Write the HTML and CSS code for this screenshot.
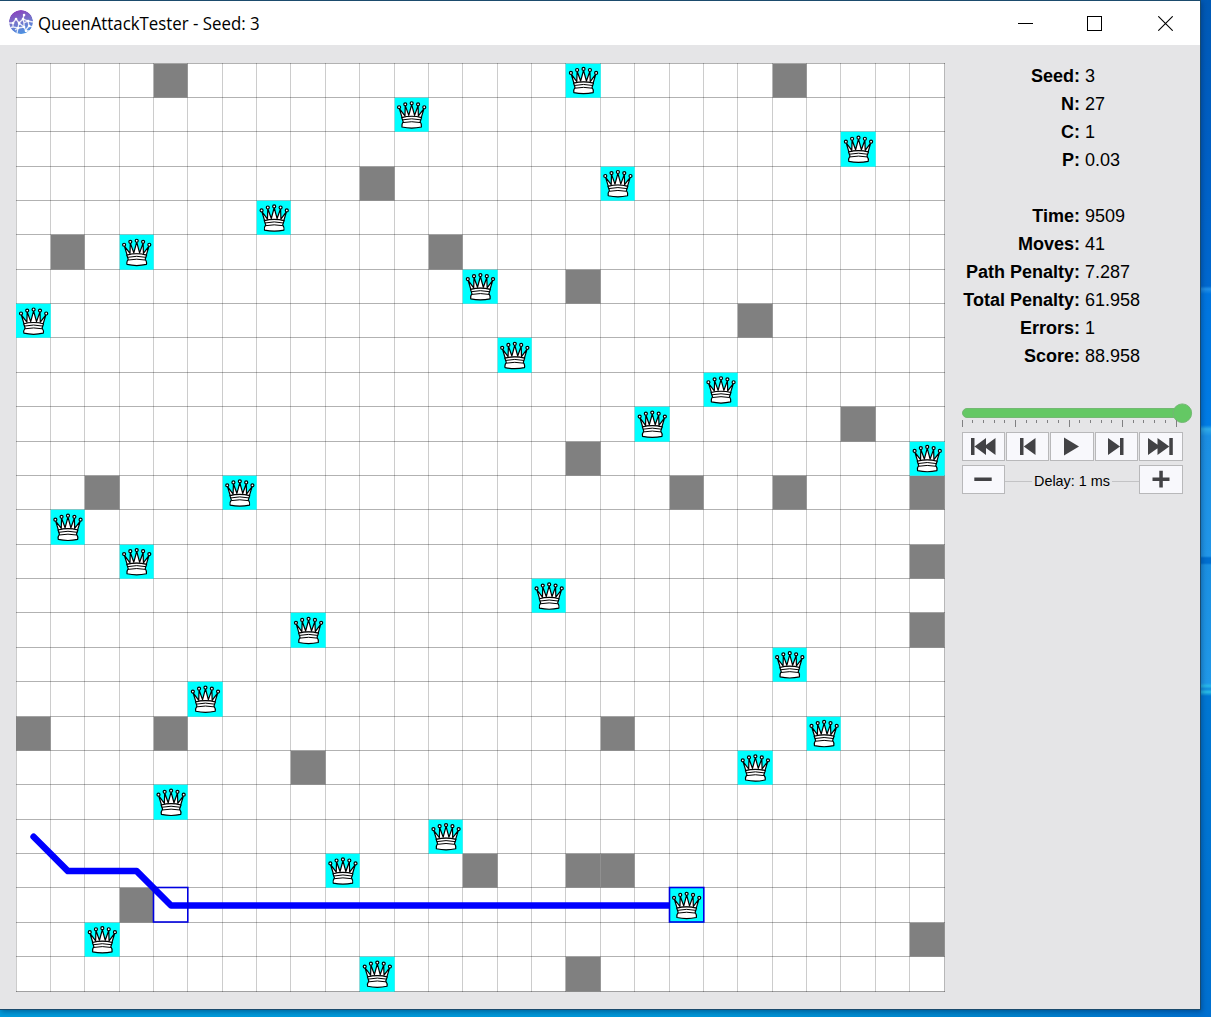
FILE: index.html
```html
<!DOCTYPE html>
<html lang="en">
<head>
<meta charset="utf-8">
<title>QueenAttackTester - Seed: 3</title>
<link rel="stylesheet" href="styles.css">
</head>
<body>
<div class="window">
  <header class="titlebar">
    <svg class="logo" width="24" height="24" viewBox="0 0 24 24">
      <defs>
        <linearGradient id="lg" x1="0.3" y1="0" x2="0.6" y2="1"><stop offset="0" stop-color="#8b40bd"/><stop offset="0.5" stop-color="#7476cb"/><stop offset="1" stop-color="#4a92e2"/></linearGradient>
        <clipPath id="lc"><circle cx="12" cy="12" r="12"/></clipPath>
      </defs>
      <g clip-path="url(#lc)">
        <circle cx="12" cy="12" r="12" fill="url(#lg)"/>
        <path d="M0 13l4 0 3-4M7 9l3 4 4-4 5 2 5 1M14 9l1-4M4 13l0 4 5 1 1-5M4 17l-4 1M9 18l-1 5M9 18l6-1 2 4 5 0M15 17l0-4 4-2 1 5 4 1M20 16l-4 5M10 13l5 4M6 20l3-2M14 9l1 4" fill="none" stroke="#fff" stroke-width="1.3" opacity="0.85"/>
        <path d="M7 9h.1M10 13h.1M14 9h.1M19 11h.1M4 13h.1M9 18h.1M15 17h.1M20 16h.1M17 21h.1M15 5h.1" stroke="#fff" stroke-width="2.5" stroke-linecap="round"/>
      </g>
    </svg>
    <span class="title">QueenAttackTester - Seed: 3</span>
    <div class="window-buttons">
      <svg width="15" height="15" shape-rendering="crispEdges"><path d="M0 7.5h15" stroke="#000"/></svg>
      <svg width="15" height="15" shape-rendering="crispEdges"><path d="M.5 .5h14v14h-14z" fill="none" stroke="#000"/></svg>
      <svg width="15" height="15"><path d="M.3 .3l14.4 14.4M14.7 .3L.3 14.7" stroke="#000" stroke-width="1.1"/></svg>
    </div>
  </header>
  <main class="content">
    <svg class="board" id="board" width="929" height="929" viewBox="0 0 929 929">
      <defs>
        <g id="queen" stroke="#000" stroke-width="1.2" stroke-linejoin="round" fill="#fff">
          <path d="M5.2 11.2L8 20.5Q17.5 18 27 20.5L29.8 11.2 24.2 18.6 23.9 8.3 20.4 18 17.5 7.3 14.6 18 11.1 8.3 10.8 18.6z"/>
          <path d="M7.6 20.2Q17.5 17.6 27.4 20.2L26 24.4Q27.900 27 27.200 29.600Q17.500 31.800 7.800 29.600Q7.100 27 9 24.400z"/>
          <path d="M8.200 22.500Q17.500 20.400 26.800 22.500M8.800 25.200Q17.500 23.500 26.200 25.200" fill="none" stroke-width="1"/>
          <circle cx="4.9" cy="9.9" r="1.5"/><circle cx="11.1" cy="7" r="1.5"/><circle cx="17.5" cy="5.9" r="1.5"/><circle cx="23.9" cy="7" r="1.5"/><circle cx="30.1" cy="9.9" r="1.5"/>
        </g>
      </defs>
    </svg>
    <aside class="side">
      <dl class="stats">
        <dt>Seed:</dt><dd>3</dd>
        <dt>N:</dt><dd>27</dd>
        <dt>C:</dt><dd>1</dd>
        <dt>P:</dt><dd>0.03</dd>
        <dt class="gap">Time:</dt><dd class="gap">9509</dd>
        <dt>Moves:</dt><dd>41</dd>
        <dt>Path Penalty:</dt><dd>7.287</dd>
        <dt>Total Penalty:</dt><dd>61.958</dd>
        <dt>Errors:</dt><dd>1</dd>
        <dt>Score:</dt><dd>88.958</dd>
      </dl>
      <svg class="slider" width="231" height="26" viewBox="0 0 231 26">
        <rect x=".5" y="5.5" width="224" height="9" rx="4.5" fill="#64c864" stroke="#73b873"/>
        <circle cx="220.3" cy="10.2" r="9.3" fill="#64c864" stroke="#73b873"/>
        <g id="ticks" fill="#808082" shape-rendering="crispEdges"></g>
      </svg>
      <div class="controls">
        <button class="btn"><svg width="43" height="29"><path d="M9 6h3.5v17H9zM12.5 14.5L24 6v17zM22 14.5L33.5 6v17z"/></svg></button>
        <button class="btn"><svg width="43" height="29"><path d="M14 6h3.5v17H14zM17.8 14.5L29.5 6v17z"/></svg></button>
        <button class="btn wide"><svg width="44" height="29"><path d="M14 5.5v18L29 14.5z"/></svg></button>
        <button class="btn"><svg width="43" height="29"><path d="M25 6h3.5v17H25zM25 14.5L13 6v17z"/></svg></button>
        <button class="btn wide"><svg width="44" height="29"><path d="M30.3 6h3.5v17h-3.5zM30.3 14.5L18.5 6v17zM21 14.5L9 6v17z"/></svg></button>
      </div>
      <div class="delay-row">
        <button class="btn"><svg width="43" height="29"><path d="M12.3 12.5h17.4v3.5H12.300z"/></svg></button>
        <div class="delay"><span>Delay: 1 ms</span></div>
        <button class="btn wide"><svg width="44" height="29"><path d="M13.5 12.5h17v3.5h-17zM20.3 5.800h3.500v16.800h-3.500z"/></svg></button>
      </div>
    </aside>
  </main>
</div>
<script src="board.js"></script>
</body>
</html>
```
FILE: styles.css
```css
* { box-sizing: border-box; }
body {
  margin: 0;
  width: 1211px;
  height: 1017px;
  overflow: hidden;
  font-family: "Liberation Sans", Arial, sans-serif;
  color: #000;
  background:
    linear-gradient(90deg, #009bdb 0, #009bdb 200px, #0097d8 700px, #0083cc 1000px, #0070d0 1211px) 0 1009px / 1211px 8px no-repeat,
    linear-gradient(180deg, #0059b5 0, #005fc4 150px, #0068cf 286px, #2291e8 289px, #0075df 294px, #007ce5 425px, #2fabe9 429px, #1b8fe3 436px, #2196e8 556px, #006fd0 558px, #006fd0 563px, #1b90e2 565px, #2098e8 683px, #28b9ea 686px, #128bdc 689px, #29bde6 692px, #0077d3 696px, #0070d0 1009px);
}
.window {
  width: 1201px;
  height: 1010px;
  border: solid #1b4b6d;
  border-width: 1px 1px 1px 0;
  background: #e5e5e7;
  box-shadow: 1px 2px 5px rgba(0, 30, 70, .4);
}
.titlebar {
  display: flex;
  align-items: center;
  height: 44px;
  padding: 0 27px 0 9px;
  background: #fff;
}
.logo { margin-bottom: 2px; }
.title {
  margin-left: 5px;
  font: 18px/24px "Open Sans", "Noto Sans", sans-serif;
  white-space: nowrap;
  transform: scaleX(.935);
  transform-origin: 0 50%;
}
.window-buttons { display: flex; gap: 56px; margin-left: auto; }
.window-buttons svg { display: block; }
.window-buttons svg:nth-child(2) { margin-left: -2px; }
.content { display: flex; padding: 18px 0 0 16px; }
.board { display: block; flex: none; }
.side { width: 231px; margin-left: 17px; }
.stats {
  display: grid;
  grid-template-columns: 118px auto;
  column-gap: 5px;
  margin: -1px 0 0;
  font-size: 18px;
  line-height: 28px;
}
.stats dt { font-weight: bold; text-align: right; white-space: nowrap; }
.stats dd { margin: 0; }
.stats .gap { margin-top: 28px; }
.slider { display: block; margin-top: 33px; }
.controls { display: flex; gap: 1px; margin-top: 3px; }
.delay-row { display: flex; margin-top: 4px; }
.btn {
  width: 43px;
  height: 29px;
  padding: 0;
  border: 1px solid #b8b8ba;
  background: #f8f8fc;
}
.btn.wide { width: 44px; }
.btn svg { display: block; margin: -1px; fill: #424245; }
.delay {
  display: flex;
  align-items: center;
  width: 134px;
  font-size: 14.4px;
  white-space: nowrap;
}
.delay span { padding: 2px 2px 0; }
.delay::before, .delay::after { content: ""; flex: 1; height: 1px; margin-top: 4px; background: #c3c3c5; }
.grid-v { fill: rgba(0, 0, 0, .2); }
.grid-h { fill: rgba(0, 0, 0, .3); }
.blocked { fill: #808080; }
.occupied { fill: #0ff; }
.path { fill: none; stroke: #00f; stroke-width: 6.5; stroke-linecap: round; stroke-linejoin: round; }
.mark { fill: none; stroke: #0000e0; stroke-width: 1.6; }
```
FILE: board.js
```js
const NS = "http://www.w3.org/2000/svg";
const N = 27;
const SIZE = 928 / N;
const board = document.getElementById("board");
const at = i => Math.floor(i * SIZE + 0.01);

function add(parent, tag, attrs) {
  const el = document.createElementNS(NS, tag);
  for (const key in attrs) el.setAttribute(key, attrs[key]);
  parent.appendChild(el);
}
function cell(c, r, cls) {
  const x = at(c) + (c ? 0.7 : 0);
  const y = at(r) + 0.7;
  add(board, "rect", { class: cls, x, y, width: at(c + 1) + 0.7 - x, height: at(r + 1) + 0.7 - y });
}

// Columns per row
const blocked = [[4, 22], [], [], [10], [], [1, 12], [16], [21], [], [], [24], [16], [2, 19, 22, 26], [], [26], [], [26], [], [], [0, 4, 17], [8], [], [], [13, 16, 17], [3], [26], [16]];
const queens = [16, 11, 24, 17, 7, 3, 13, 0, 14, 20, 18, 26, 6, 1, 3, 15, 8, 22, 5, 23, 21, 4, 12, 9, 19, 2, 10];

add(board, "rect", { width: 928, height: 928, fill: "#fff" });
for (let i = 0; i <= N; i++) {
  add(board, "rect", { class: "grid-v", x: at(i), y: 0, width: 1, height: 929 });
  add(board, "rect", { class: "grid-h", x: 0, y: at(i), width: 929, height: 1 });
}
blocked.forEach((cols, r) => cols.forEach(c => cell(c, r, "blocked")));

const mid = i => (i + 0.5) * SIZE + 0.4;
const points = [[0, 22], [1, 23], [3, 23], [4, 24], [19, 24]].map(([c, r]) => mid(c) + "," + mid(r)).join(" ");
add(board, "polyline", { class: "path", points });
queens.forEach((c, r) => cell(c, r, "occupied"));

for (const c of [4, 19]) {
  add(board, "rect", { class: "mark", x: at(c) + 0.5, y: at(24) + 0.5, width: 34.3, height: 34.5 });
}
queens.forEach((c, r) => add(board, "use", { href: "#queen", x: c * SIZE + 0.1, y: r * SIZE }));

const ticks = document.getElementById("ticks");
for (let i = 0; i <= 20; i++) {
  add(ticks, "rect", { x: Math.floor(i * 10.7), y: 17, width: 1, height: i % 5 ? 3 : 7 });
}
```
